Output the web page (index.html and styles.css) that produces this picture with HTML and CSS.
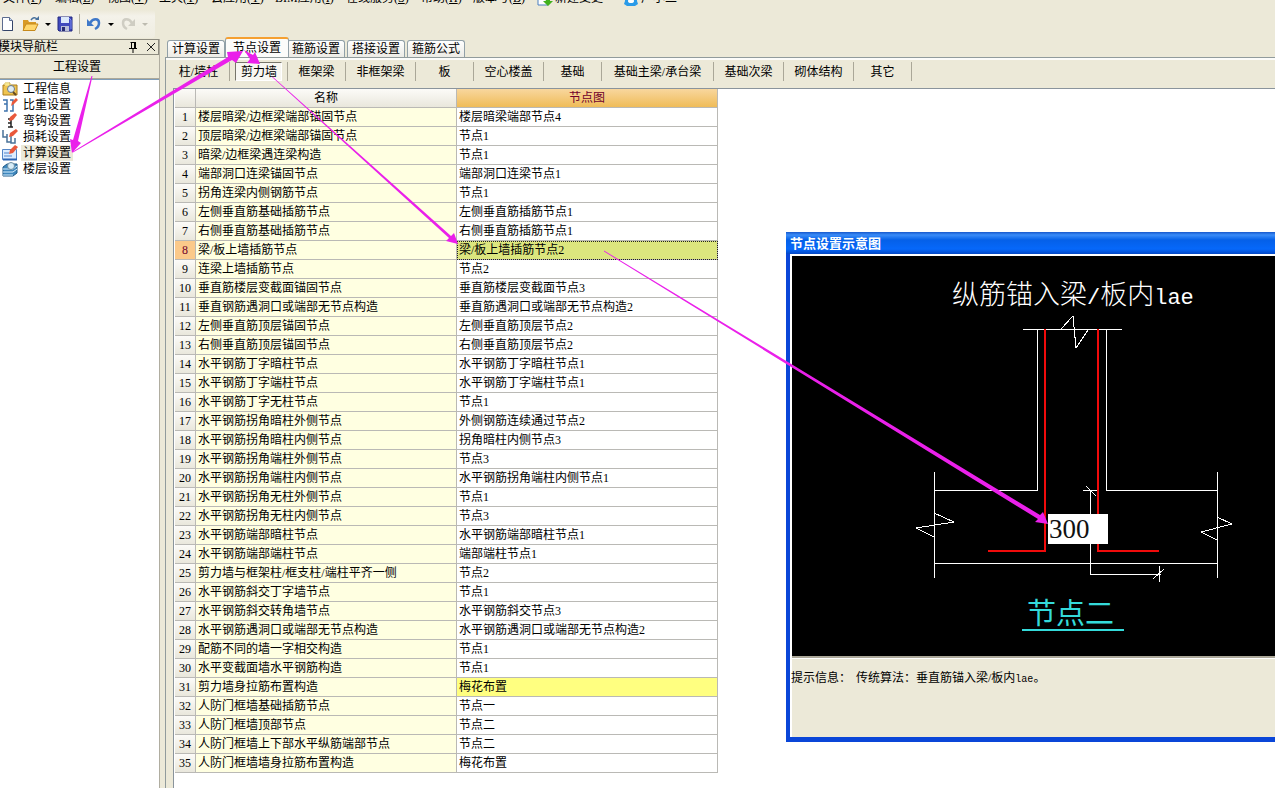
FILE: index.html
```html
<!DOCTYPE html>
<html lang="zh-CN">
<head>
<meta charset="utf-8">
<title>节点设置</title>
<link rel="stylesheet" href="styles.css">
</head>
<body>
<nav class="menu">
  <button class="m">文件(<u>F</u>)</button><button class="m">编辑(<u>E</u>)</button><button class="m">视图(<u>V</u>)</button><button class="m">工具(<u>T</u>)</button><button class="m m-mid">云应用(<u>Y</u>)</button><button class="m m-bim">BIM应用(<u>I</u>)</button><button class="m m-wide">在线服务(<u>S</u>)</button><button class="m">帮助(<u>H</u>)</button><button class="m m-mid">版本号(<u>B</u>)</button>
  <button class="m m-icon"><svg width="16" height="16" viewBox="0 0 16 16"><path d="M1 1h10v14H1z" fill="#fff" stroke="#4a7fc0"/><path d="M7 7h6v4h3l-5 5-5-5h3z" fill="#41b01e"/></svg>新建变更</button>
  <button class="m"><svg width="16" height="16" viewBox="0 0 16 16"><path d="M2 2h12v9l1 3-3 2H4l-3-2 1-3z" fill="#2a9be8"/><ellipse cx="8" cy="11" rx="3" ry="2" fill="#fff"/></svg>广小二</button>
</nav>
<div class="toolbar">
  <div class="tools">
    <button class="tool" aria-label="新建"><svg width="16" height="16" viewBox="0 0 16 16"><path d="M2.500 1.500h7l3 3v10h-10z" fill="#fdfeff" stroke="#5b6b8f"/><path d="M9.500 1.500v3h3" fill="#c8d8ee" stroke="#5b6b8f"/><path d="M12.500 5v9.500h-9" fill="none" stroke="#344468"/></svg></button>
    <button class="tool tool-open" aria-label="打开"><svg width="18" height="16" viewBox="0 0 18 16"><path d="M1 14V4h5l1 2h7v8z" fill="#d89a25"/><path d="M1 14.500L4 8h12l-3 6.500z" fill="#ffd76c" stroke="#c68a1c"/><path d="M9 4q3-4 6-1" fill="none" stroke="#47709c" stroke-width="1.500"/><path d="M13 4h4V0z" fill="#47709c"/></svg><i class="caret"></i></button>
    <button class="tool" aria-label="保存"><svg width="16" height="16" viewBox="0 0 16 16"><path d="M1 1h14v14H2l-1-1z" fill="#3f49bd" stroke="#242a80"/><path d="M4 1h8v6H4z" fill="#dbe8fb"/><path d="M4 10h8v5H4z" fill="#b9bfd9"/><path d="M5 11h3v4H5z" fill="#262b73"/><path d="M12 2l2 2v9" fill="none" stroke="#7d8df0"/></svg></button>
    <i class="tool-sep"></i>
    <button class="tool" aria-label="撤销"><svg width="16" height="16" viewBox="0 0 16 16"><path d="M4 7C7 2 13 2 13 7c0 3-2 5-4 6" fill="none" stroke="#3f78c9" stroke-width="2.500"/><path d="M1 3v7h7z" fill="#3f78c9"/></svg><i class="caret"></i></button>
    <button class="tool off" aria-label="重做" disabled><svg width="16" height="16" viewBox="0 0 16 16"><path d="M12 7C9 2 3 2 3 7c0 3 2 5 4 6" fill="none" stroke="#cfcdc3" stroke-width="2.500"/><path d="M15 3v7H8z" fill="#cfcdc3"/></svg><i class="caret"></i></button>
  </div>
</div>
<main class="main">
  <aside class="side">
    <header class="side-head"><span class="side-name">模块导航栏</span>
      <svg width="12" height="12" viewBox="0 0 12 12"><path d="M3.500 1.500h5M4.500 1v6M7.500 1v6M8.500 1v6M2 7.500h8M6 8v4" fill="none" stroke="#000"/></svg>
      <svg width="12" height="12" viewBox="0 0 12 12"><path d="M2 2l8 8M10 2l-8 8" fill="none" stroke="#222"/></svg>
    </header>
    <button class="group">工程设置</button>
    <ul class="tree">
      <li><button class="node"><svg width="16" height="16" viewBox="0 0 16 16"><path d="M1 14V4h2V2h5v2h7v10z" fill="#efc450" stroke="#aa7c1c"/><path d="M4 1v4M6 1v4M2 3h7" stroke="#fff7a6"/><circle cx="9" cy="8" r="3.500" fill="#dfedf5" stroke="#68798a"/><path d="M11 11l3 3" stroke="#654a20" stroke-width="2"/></svg><span>工程信息</span></button></li>
      <li><button class="node"><svg width="16" height="16" viewBox="0 0 16 16"><path d="M1 3h4v11H2M8 3h3v11H8M2 7h3" fill="none" stroke="#3e73ad" stroke-width="1.500"/><path d="M9 9l1-4 4-4 2 2-4 4z" fill="#e9583b"/></svg><span>比重设置</span></button></li>
      <li><button class="node"><svg width="16" height="16" viewBox="0 0 16 16"><path d="M6 6h3v8M6 14h5M6 10h3" fill="none" stroke="#222" stroke-width="1.500"/><path d="M7 8l1-4 5-4 2 2-4 5z" fill="#e9583b"/></svg><span>弯钩设置</span></button></li>
      <li><button class="node"><svg width="16" height="16" viewBox="0 0 16 16"><path d="M1 1v7h4M5 5v8h4M9 7v7h4V9" fill="none" stroke="#4a7298" stroke-width="1.500"/><path d="M7 8l1-4 6-4 2 2-5 5z" fill="#e9583b"/></svg><span>损耗设置</span></button></li>
      <li><button class="node on"><svg width="16" height="16" viewBox="0 0 16 16"><path d="M.5 4.500h14v10H.5z" fill="#dcecff" stroke="#5586c6"/><path d="M2 8h5M2 11h8" stroke="#4e83ca"/><path d="M1 14.500h14" stroke="#2c64b4" stroke-width="2"/><path d="M7 9l1-4 5-5 3 2-5 6z" fill="#e9583b"/></svg><span>计算设置</span></button></li>
      <li><button class="node"><svg width="16" height="16" viewBox="0 0 16 16"><path d="M1 6l4-3h10v9l-4 3H1z" fill="#3e87bd" stroke="#205a87"/><path d="M1 8h10l4-3M1 11h10l4-3M1 14h10" fill="none" stroke="#d7efff"/><circle cx="9" cy="5" r="3.500" fill="#d8edf8" stroke="#6a8ba0"/></svg><span>楼层设置</span></button></li>
    </ul>
  </aside>
  <section class="work">
    <div class="tabs">
      <button class="tab">计算设置</button><button class="tab cur">节点设置</button><button class="tab">箍筋设置</button><button class="tab">搭接设置</button><button class="tab">箍筋公式</button>
    </div>
    <div class="page">
      <div class="kinds">
        <button class="kind first">柱/墙柱</button><button class="kind"><span class="pressed">剪力墙</span></button><button class="kind">框架梁</button><button class="kind k4">非框架梁</button><button class="kind">板</button><button class="kind k4">空心楼盖</button><button class="kind">基础</button><button class="kind k8">基础主梁/承台梁</button><button class="kind k4">基础次梁</button><button class="kind k4">砌体结构</button><button class="kind">其它</button>
      </div>
      <div class="sheet">
        <table class="grid">
          <thead><tr><th class="no"></th><th>名称</th><th class="hot">节点图</th></tr></thead>
          <tbody>
            <tr><th>1</th><td>楼层暗梁/边框梁端部锚固节点</td><td>楼层暗梁端部节点4</td></tr>
            <tr><th>2</th><td>顶层暗梁/边框梁端部锚固节点</td><td>节点1</td></tr>
            <tr><th>3</th><td>暗梁/边框梁遇连梁构造</td><td>节点1</td></tr>
            <tr><th>4</th><td>端部洞口连梁锚固节点</td><td>端部洞口连梁节点1</td></tr>
            <tr><th>5</th><td>拐角连梁内侧钢筋节点</td><td>节点1</td></tr>
            <tr><th>6</th><td>左侧垂直筋基础插筋节点</td><td>左侧垂直筋插筋节点1</td></tr>
            <tr><th>7</th><td>右侧垂直筋基础插筋节点</td><td>右侧垂直筋插筋节点1</td></tr>
            <tr class="sel"><th>8</th><td>梁/板上墙插筋节点</td><td>梁/板上墙插筋节点2</td></tr>
            <tr><th>9</th><td>连梁上墙插筋节点</td><td>节点2</td></tr>
            <tr><th>10</th><td>垂直筋楼层变截面锚固节点</td><td>垂直筋楼层变截面节点3</td></tr>
            <tr><th>11</th><td>垂直钢筋遇洞口或端部无节点构造</td><td>垂直筋遇洞口或端部无节点构造2</td></tr>
            <tr><th>12</th><td>左侧垂直筋顶层锚固节点</td><td>左侧垂直筋顶层节点2</td></tr>
            <tr><th>13</th><td>右侧垂直筋顶层锚固节点</td><td>右侧垂直筋顶层节点2</td></tr>
            <tr><th>14</th><td>水平钢筋丁字暗柱节点</td><td>水平钢筋丁字暗柱节点1</td></tr>
            <tr><th>15</th><td>水平钢筋丁字端柱节点</td><td>水平钢筋丁字端柱节点1</td></tr>
            <tr><th>16</th><td>水平钢筋丁字无柱节点</td><td>节点1</td></tr>
            <tr><th>17</th><td>水平钢筋拐角暗柱外侧节点</td><td>外侧钢筋连续通过节点2</td></tr>
            <tr><th>18</th><td>水平钢筋拐角暗柱内侧节点</td><td>拐角暗柱内侧节点3</td></tr>
            <tr><th>19</th><td>水平钢筋拐角端柱外侧节点</td><td>节点3</td></tr>
            <tr><th>20</th><td>水平钢筋拐角端柱内侧节点</td><td>水平钢筋拐角端柱内侧节点1</td></tr>
            <tr><th>21</th><td>水平钢筋拐角无柱外侧节点</td><td>节点1</td></tr>
            <tr><th>22</th><td>水平钢筋拐角无柱内侧节点</td><td>节点3</td></tr>
            <tr><th>23</th><td>水平钢筋端部暗柱节点</td><td>水平钢筋端部暗柱节点1</td></tr>
            <tr><th>24</th><td>水平钢筋端部端柱节点</td><td>端部端柱节点1</td></tr>
            <tr><th>25</th><td>剪力墙与框架柱/框支柱/端柱平齐一侧</td><td>节点2</td></tr>
            <tr><th>26</th><td>水平钢筋斜交丁字墙节点</td><td>节点1</td></tr>
            <tr><th>27</th><td>水平钢筋斜交转角墙节点</td><td>水平钢筋斜交节点3</td></tr>
            <tr><th>28</th><td>水平钢筋遇洞口或端部无节点构造</td><td>水平钢筋遇洞口或端部无节点构造2</td></tr>
            <tr><th>29</th><td>配筋不同的墙一字相交构造</td><td>节点1</td></tr>
            <tr><th>30</th><td>水平变截面墙水平钢筋构造</td><td>节点1</td></tr>
            <tr class="mark"><th>31</th><td>剪力墙身拉筋布置构造</td><td>梅花布置</td></tr>
            <tr><th>32</th><td>人防门框墙基础插筋节点</td><td>节点一</td></tr>
            <tr><th>33</th><td>人防门框墙顶部节点</td><td>节点二</td></tr>
            <tr><th>34</th><td>人防门框墙上下部水平纵筋端部节点</td><td>节点二</td></tr>
            <tr><th>35</th><td>人防门框墙墙身拉筋布置构造</td><td>梅花布置</td></tr>
          </tbody>
        </table>
      </div>
    </div>
  </section>
</main>
<section class="dialog">
  <h2 class="dialog-title">节点设置示意图</h2>
  <div class="dialog-body">
    <div class="canvas">
      <svg class="drawing" width="483" height="400" viewBox="792 256 483 400">
        <g fill="none" stroke="#fff" shape-rendering="crispEdges">
          <path d="M1023 329.500h99M1037.500 330v160.500H935M1106.500 330v160.500h111M934.500 472v106M1217.500 472v106M935 563.500h282M1090.500 490v84.500h70M1083 490.500h16M1159.500 566v16"/>
          <path d="M1061 329l12-13 3 32 12-18M1086 486l10 10M1153 579l11-10M934 513l20 9-38 6 18 9M1217 517l15 7-31 8 16 8"/>
        </g>
        <g fill="none" stroke="#f00b0b" stroke-width="2">
          <path d="M1045 329v222h-57"/><path d="M1098 329v222h61"/>
        </g>
        <text class="cad" x="952" y="304">纵筋锚入梁<tspan class="cad-latin">/</tspan>板内<tspan class="cad-latin">lae</tspan></text>
        <text class="cad-name" x="1027" y="624">节点二</text>
        <path d="M1022 630h102" stroke="#34dada" stroke-width="2"/>
      </svg>
      <input class="length" value="300" aria-label="锚固长度">
    </div>
    <p class="hint"><span>提示信息：</span><span>传统算法：垂直筋锚入梁/板内<span class="mono">lae</span>。</span></p>
  </div>
</section>
<svg class="arrows" width="1275" height="788" viewBox="0 0 1275 788" fill="#ea20ea">
  <path d="M91.500 76h1L78 141l3 2-9 10-2-14 3 1z"/>
  <path d="M73 152.500v-1L228 57l-1-5 16-1-7 12-4-3z"/>
  <path d="M244 50l9 5 2-3 5 12-13-1 3-4z"/>
  <path d="M272 77h1l178 159 3-3 4 11-12-3 3-3z"/>
  <path d="M604 251.500v-1L1040 515l3-3 5 12-13-2 3-3z"/>
</svg>
</body>
</html>
```
FILE: styles.css
```css
* { box-sizing: border-box; }
body {
  margin: 0;
  height: 100vh;
  display: flex;
  flex-direction: column;
  position: relative;
  overflow: hidden;
  background: #ece9d8;
  color: #000;
  font: 12px/16px "Liberation Serif", "Noto Sans CJK SC", sans-serif;
}
button {
  font: inherit;
  color: inherit;
  background: none;
  border: 0;
  padding: 0;
  margin: 0;
  white-space: nowrap;
}
svg { flex: none; }

.menu { display: flex; flex: none; height: 20px; margin-top: -10px; padding-left: 3px; }
.m { display: flex; height: 16px; width: 52px; flex: none; text-align: left; }
.m-mid { width: 64px; }
.m-bim { width: 71px; }
.m-wide { width: 75px; }
.m-icon { width: 86px; }
.m svg { margin-right: 2px; }

.toolbar { flex: none; height: 29px; display: flex; }
.tools {
  display: flex;
  align-items: center;
  gap: 6px;
  width: 155px;
  height: 28px;
  border-radius: 0 3px 3px 0;
  background: linear-gradient(#ece9d8, #f4f2ea 6px, #efede1);
}
.tool { display: flex; align-items: center; gap: 6px; }
.tool-open { gap: 5px; }
.tool-sep { width: 1px; height: 20px; background: #b5b2a2; }
.caret { border: 3px solid transparent; border-top-color: #000; border-bottom: 0; }
.off .caret { border-top-color: #bdbbb0; }

.main { flex: 1; min-height: 0; display: flex; gap: 5px; }
.side { width: 160px; flex: none; display: flex; flex-direction: column; border-right: 1px solid #b0ada0; }
.side-head {
  display: flex;
  align-items: center;
  gap: 6px;
  height: 16px;
  border: 1px solid #8d8b80;
  border-left: 0;
  padding-right: 1px;
}
.side-name { flex: 1; margin-left: -2px; }
.group { height: 24px; padding-right: 5px; border-bottom: 1px solid #aca899; }
.tree { flex: 1; margin: 0; padding: 1px 0 0 2px; list-style: none; background: #fff; border-top: 1px solid #7f9db9; }
.node { display: flex; gap: 3px; height: 16px; }
.node span { padding: 0 2px; }
.on span { background: #ece9d8; }

.work { flex: 1; min-width: 0; display: flex; flex-direction: column; }
.tabs { display: flex; align-items: flex-end; gap: 2px; height: 18px; padding-left: 2px; }
.tab {
  width: 58px;
  height: 17px;
  border: 1px solid #91a0a8;
  border-bottom: 0;
  border-radius: 3px 3px 0 0;
  background: linear-gradient(#fff, #ecebe5);
}
.cur {
  position: relative;
  z-index: 1;
  width: 64px;
  height: 20px;
  margin: 0 -4px 0 -2px;
  border-top: 2px solid #f5a031;
  background: #fcfcfa;
}
.page { flex: 1; min-height: 0; display: flex; flex-direction: column; border: solid #919b9c; border-width: 1px 0 0 1px; }
.kinds { display: flex; height: 30px; padding: 2px 0 7px 6px; border-top: 2px solid #fcfcfa; }
.kind { width: 58px; border-right: 1px solid #aaa798; display: flex; align-items: center; justify-content: center; }
.first { padding-right: 4px; }
.k4 { width: 70px; }
.k8 { width: 112px; }
.pressed { padding: 1px 4px 0 5px; height: 19px; background: #f7f6f1; border: 1px solid; border-color: #77756a #fff #fff #77756a; }
.sheet { flex: 1; min-height: 0; margin-left: 7px; padding-left: 1px; border: solid #8a949c; border-width: 1px 0 0 1px; background: #fff; }

.grid { width: 543px; table-layout: fixed; border-collapse: separate; border-spacing: 0; }
.grid th, .grid td { height: 19px; padding: 0 2px; border: solid #bab9b5; border-width: 0 1px 1px 0; line-height: 18px; font-weight: 400; white-space: nowrap; }
.grid td { text-align: left; }
.grid th { padding: 0; background: linear-gradient(#fcfbf8, #e9e7dc); }
.grid .no { width: 21px; }
.grid td:nth-child(2) { background: #ffffe1; }
.grid .hot { background: linear-gradient(#f8d79e, #efbc58); color: #70002c; }
.grid .sel th { background: #fbc98a; color: #70002c; }
.grid .sel td:nth-child(3) { background: #dce67e; outline: 1px dotted #222; outline-offset: -1px; }
.grid .mark td:nth-child(3) { background: #ffff80; }

.dialog {
  position: absolute;
  left: 786px;
  right: 0;
  top: 232px;
  border: solid #0a46d8;
  border-width: 0 0 5px 4px;
  background: #ece9d8;
}
.dialog-title {
  margin: 0 0 0 -4px;
  padding: 1px 0 0 4px;
  height: 22px;
  line-height: 22px;
  font-size: 13px;
  font-weight: 700;
  color: #fff;
  background: linear-gradient(#1658cc, #3a8cf8 3px, #0560e8 8px, #0668fa 17px, #0348c8);
}
.dialog-body { border: solid #fff; border-width: 2px 0 0 2px; }
.canvas { position: relative; height: 402px; overflow: hidden; background: #000; border-bottom: 2px solid #aca899; }
.drawing { display: block; }
.cad { font: 300 27px "Noto Sans CJK SC", sans-serif; fill: #fff; }
.cad-latin { font: 22px "Liberation Mono", monospace; }
.cad-name { font: 400 29px "Noto Sans CJK SC", sans-serif; fill: #34dada; }
.length {
  position: absolute;
  left: 256px;
  top: 258px;
  width: 60px;
  height: 30px;
  padding: 0 1px;
  border: 0;
  border-radius: 0;
  background: #fff;
  color: #111;
  font: 27px "Liberation Serif", serif;
}
.hint { display: flex; gap: 5px; margin: 0 0 0 -2px; height: 79px; padding: 11px 0 0 1px; border-top: 1px solid #fff; }
.mono { font-family: "Liberation Mono", monospace; font-size: 10px; }
.arrows { position: absolute; z-index: 5; left: 0; top: 0; pointer-events: none; }
```
